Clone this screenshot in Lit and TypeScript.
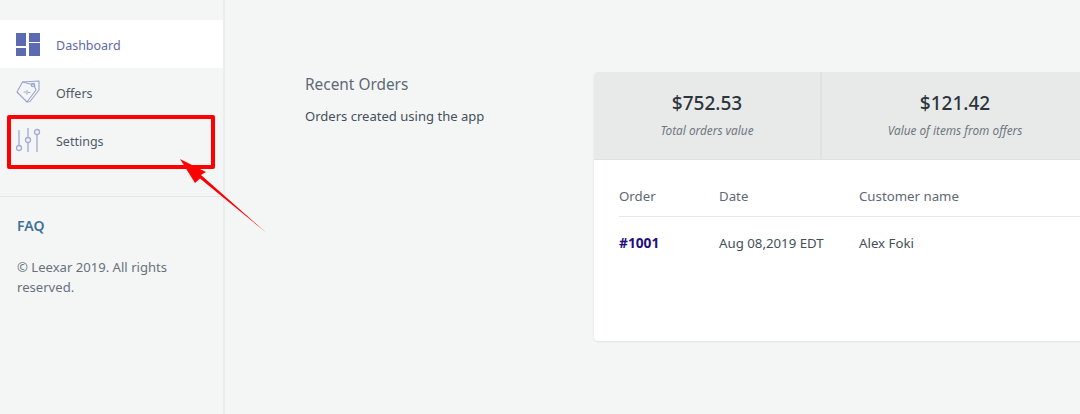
import { LitElement, html, css, svg } from "lit";
import { customElement } from "lit/decorators.js";

const dashIcon = svg`<svg class="ico" width="24" height="24" viewBox="0 0 24 24" fill="#5c6ab2"><rect x="0" y="1" width="10" height="13"/><rect x="13" y="1" width="11" height="9"/><rect x="0" y="16" width="10" height="8"/><rect x="13" y="11" width="11" height="13"/></svg>`;
const offerIcon = svg`<svg class="ico" width="26" height="26" viewBox="0 0 26 26" fill="none" stroke="#9aa3cf" stroke-width="1.1" stroke-linejoin="round" stroke-linecap="round"><path d="M1 13 L6.5 3 L18 6 L20 11 L11 23 Z"/><path d="M6.5 3 L23 2 L23 11 L14 22.5 L11 23"/><circle cx="17" cy="6" r="1.8"/><path d="M8 13h1.5M12.5 13.5h1.5M11 11.5v3.5"/></svg>`;
const slidersIcon = svg`<svg class="ico" width="26" height="26" viewBox="0 0 26 26" fill="none" stroke="#a2aad3" stroke-width="1.3"><path d="M3 3v15.5M12 1v9.5M12 15.5v9.5M21 7.5v17.5"/><circle cx="3" cy="21" r="2.5"/><circle cx="12" cy="13" r="2.5"/><circle cx="21" cy="5" r="2.5"/></svg>`;

@customElement("app-root")
export class AppRoot extends LitElement {
  static styles = css`
    :host {
      display: block;
      position: relative;
      width: 1080px;
      height: 414px;
      overflow: hidden;
      background: #f4f6f6;
      font-family: "Noto Sans", "Open Sans", sans-serif;
      color: #454f5b;
    }
    .page { display: flex; height: 100%; }
    .side {
      width: 223px;
      flex: none;
      box-sizing: content-box;
      border-right: 2px solid #ebeeee;
      padding-top: 20px;
    }
    .nav { display: flex; flex-direction: column; }
    .item {
      height: 48px;
      display: flex;
      align-items: center;
      padding-left: 16px;
      font-size: 12.5px;
      line-height: 20px;
      color: #505a66;
    }
    .item .txt { padding-top: 4px; }
    .item.active { background: #fff; color: #5f69a8; }
    .ico { flex: none; }
    .item .slot { width: 40px; display: flex; }
    .rule { height: 1px; background: #e3e6e6; margin-top: 32px; }
    .faq {
      margin: 20px 0 0 17px;
      font-size: 14px;
      line-height: 18px;
      font-weight: 600;
      color: #3f7196;
    }
    .copy {
      margin: 22px 16px 0 17px;
      font-size: 13.1px;
      line-height: 20px;
      color: #68717b;
    }
    .main {
      flex: 1;
      min-width: 0;
      display: flex;
      padding: 72px 0 0 80px;
    }
    .intro { width: 289px; flex: none; }
    .intro h2 {
      margin: 3px 0 0;
      font-size: 15.4px;
      line-height: 20px;
      font-weight: 400;
      color: #5f6975;
    }
    .intro p {
      margin: 11px 0 0;
      font-size: 13.05px;
      line-height: 20px;
      color: #454f5b;
    }
    .card {
      width: 700px;
      flex: none;
      height: 269px;
      background: #fff;
      border-radius: 4px;
      overflow: hidden;
      box-shadow: 0 1px 2px rgba(60, 70, 80, 0.12);
      align-self: flex-start;
    }
    .stats {
      display: flex;
      height: 87px;
      background: #e8eaea;
      border-bottom: 1px solid #dfe2e2;
    }
    .stat {
      text-align: center;
      padding-top: 19px;
      box-sizing: border-box;
    }
    .stat.a { width: 228px; border-right: 2px solid #dfe2e2; }
    .stat.b { width: 266px; }
    .stat .num {
      font-size: 19px;
      line-height: 24px;
      font-weight: 500;
      color: #2c343c;
    }
    .stat .lbl {
      margin-top: 7px;
      font-size: 11.8px;
      line-height: 16px;
      font-style: italic;
      color: #6f7780;
    }
    .tbl { padding: 26px 0 0 25px; }
    .row {
      display: grid;
      grid-template-columns: 100px 140px 1fr;
      font-size: 13.25px;
      line-height: 20px;
    }
    .head { padding-bottom: 10px; border-bottom: 1px solid #e6e8e8; color: #5f6975; }
    .body { padding-top: 16px; color: #454f5b; }
    .id { font-weight: 700; font-size: 13.75px; color: #23107c; }
    .overlay { position: absolute; left: 0; top: 0; pointer-events: none; }
  `;

  render() {
    return html`
      <div class="page">
        <aside class="side">
          <nav class="nav">
            <div class="item active"><span class="slot">${dashIcon}</span><span class="txt">Dashboard</span></div>
            <div class="item"><span class="slot">${offerIcon}</span><span class="txt">Offers</span></div>
            <div class="item"><span class="slot">${slidersIcon}</span><span class="txt">Settings</span></div>
          </nav>
          <div class="rule"></div>
          <div class="faq">FAQ</div>
          <div class="copy">© Leexar 2019. All rights reserved.</div>
        </aside>
        <main class="main">
          <section class="intro">
            <h2>Recent Orders</h2>
            <p>Orders created using the app</p>
          </section>
          <section class="card">
            <div class="stats">
              <div class="stat a"><div class="num">$752.53</div><div class="lbl">Total orders value</div></div>
              <div class="stat b"><div class="num">$121.42</div><div class="lbl">Value of items from offers</div></div>
            </div>
            <div class="tbl">
              <div class="row head"><span>Order</span><span>Date</span><span>Customer name</span></div>
              <div class="row body"><span class="id">#1001</span><span>Aug 08,2019 EDT</span><span>Alex Foki</span></div>
            </div>
          </section>
        </main>
      </div>
      <svg class="overlay" width="1080" height="414" viewBox="0 0 1080 414">
        <rect x="9" y="117" width="204" height="50" fill="none" stroke="#ff0000" stroke-width="4" stroke-linejoin="round"/>
        <polygon points="180,159 206,172 201,175 266,232.5 200,178.5 195,183" fill="#ff0000"/>
      </svg>
    `;
  }
}
